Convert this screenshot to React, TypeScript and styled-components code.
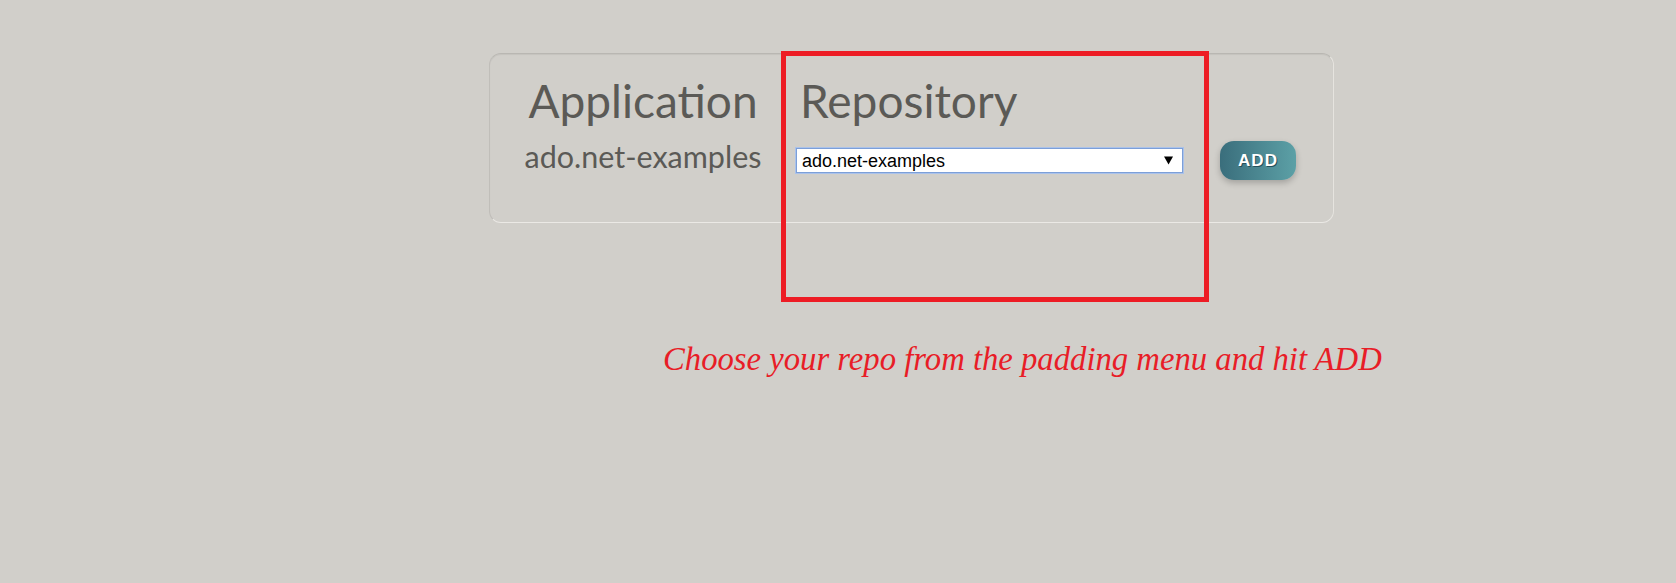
import React from 'react';
import styled, { createGlobalStyle } from 'styled-components';

const GlobalStyle = createGlobalStyle`
  html, body {
    margin: 0;
    padding: 0;
    background: #d1cfca;
  }
  body {
    font-family: Lato, "Open Sans", sans-serif;
  }
`;

function App() {
  return (
    <Page>
      <GlobalStyle />
      <Card>
        <AppColumn>
          <Heading>Application</Heading>
          <AppName>ado.net-examples</AppName>
        </AppColumn>
        <RepoColumn>
          <Heading $indent>Repository</Heading>
          <Row>
            <SelectWrap>
              <Select defaultValue="ado.net-examples">
                <option value="ado.net-examples">ado.net-examples</option>
              </Select>
              <Arrow viewBox="0 0 10 10" aria-hidden="true">
                <polygon points="0,1 10,1 5,10" />
              </Arrow>
            </SelectWrap>
            <AddButton type="button">ADD</AddButton>
          </Row>
        </RepoColumn>
        <Annotation />
      </Card>
      <Hint>Choose your repo from the padding menu and hit ADD</Hint>
    </Page>
  );
}

const Page = styled.div`
  padding: 53px 0 0 489px;
  min-height: 583px;
  box-sizing: border-box;
`;

const Card = styled.div`
  position: relative;
  display: flex;
  width: 845px;
  height: 170px;
  box-sizing: border-box;
  padding-top: 19px;
  border: 1px solid;
  border-color: #b9b7b2 #e6e4df #ebe9e5 #c0beb9;
  border-radius: 12px;
  box-shadow: inset 0 1px 1px rgba(0, 0, 0, 0.06);
`;

const AppColumn = styled.div`
  width: 306px;
  text-align: center;
`;

const RepoColumn = styled.div`
  display: flex;
  flex-direction: column;
`;

const Heading = styled.h2<{ $indent?: boolean }>`
  margin: 0;
  padding-left: ${(p) => (p.$indent ? '4px' : '0')};
  font-family: Lato, "Open Sans", sans-serif;
  font-weight: 400;
  font-size: 46px;
  line-height: 1.2;
  color: #5b5a56;
`;

const AppName = styled.div`
  margin-top: 10px;
  font-size: 30.5px;
  line-height: 1.2;
  color: #5b5a56;
`;

const Row = styled.div`
  display: flex;
  align-items: center;
  gap: 37px;
  margin-top: 13px;
`;

const SelectWrap = styled.div`
  position: relative;
  width: 387px;
  height: 25px;
`;

const Select = styled.select`
  appearance: none;
  width: 100%;
  height: 100%;
  box-sizing: border-box;
  margin: 0;
  padding: 0 24px 0 5px;
  border: 1px solid #7c9fd8;
  box-shadow: 0 0 0 1px #aac2ea;
  border-radius: 0;
  background: #fff;
  color: #000;
  font-family: "Liberation Sans", Arial, sans-serif;
  font-size: 18px;
  outline: none;
`;

const Arrow = styled.svg`
  position: absolute;
  right: 10px;
  top: 7px;
  width: 9px;
  height: 10px;
  fill: #000;
  pointer-events: none;
`;

const AddButton = styled.button`
  width: 76px;
  height: 39px;
  padding: 0;
  border: none;
  border-radius: 14px;
  background: linear-gradient(to right, #3a6e7c, #5ca0a6);
  box-shadow: 0 3px 6px rgba(0, 0, 0, 0.22);
  color: #fff;
  font-family: "Liberation Sans", Arial, sans-serif;
  font-weight: 700;
  font-size: 17px;
  letter-spacing: 1px;
  text-shadow: 1px 1px 0 #24505c;
  cursor: pointer;
`;

// red frame drawn over the screenshot around the repository column
const Annotation = styled.div`
  position: absolute;
  left: 291px;
  top: -3px;
  width: 428px;
  height: 251px;
  box-sizing: border-box;
  border: 5px solid #ed1c24;
  pointer-events: none;
`;

const Hint = styled.p`
  margin: 120px 0 0 174px;
  font-family: "Liberation Serif", "DejaVu Serif", serif;
  font-style: italic;
  font-size: 32.7px;
  line-height: 1;
  color: #e81d27;
`;

export default App;
